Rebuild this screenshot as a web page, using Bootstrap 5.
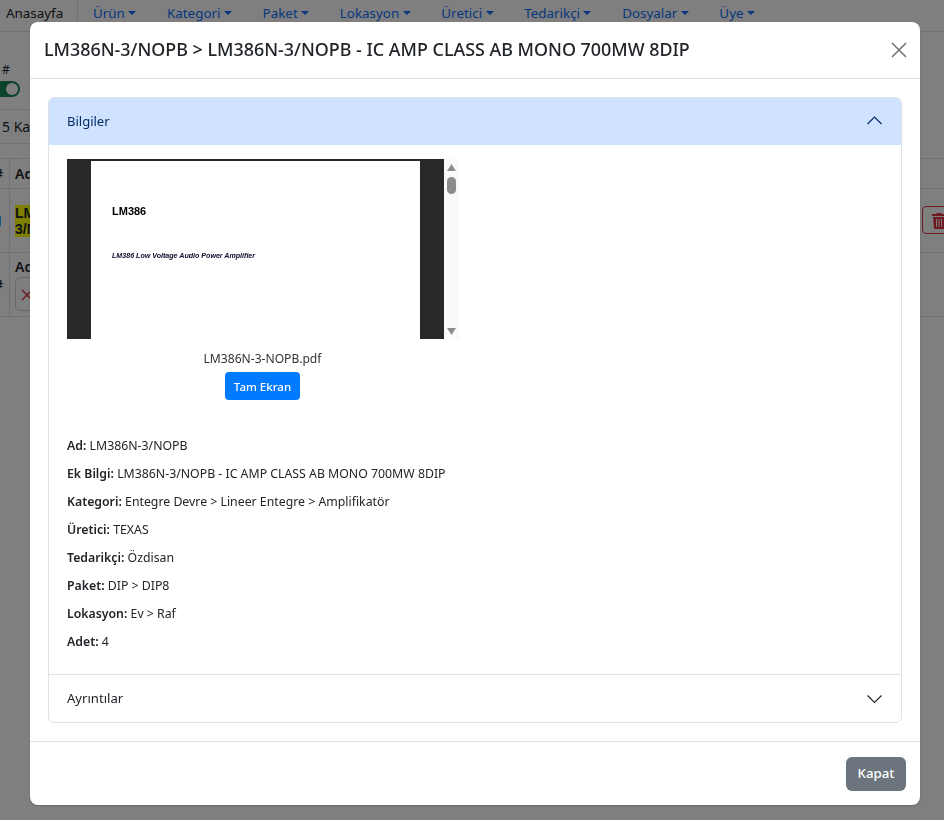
<!doctype html>
<html lang="tr"><head><meta charset="utf-8">
<link href="https://cdn.jsdelivr.net/npm/bootstrap@5.3.0/dist/css/bootstrap.min.css" rel="stylesheet">
<style>
html,body{height:820px;overflow:hidden}
body{font-family:"Noto Sans","Open Sans",sans-serif;font-size:13px;color:#212529;background:#fff}
.topnav{height:32px;border-bottom:1px solid #dee2e6;align-items:flex-start;padding-top:3px;font-size:13.4px;white-space:nowrap}
.topnav a{color:#0d6efd;text-decoration:none}
.topnav .homelink{color:#212529;padding:0 12px 0 6px;margin-top:-3px;padding-top:3px;border-right:1px solid #dee2e6;height:27px;width:78px}
.menulinks{gap:30.7px;padding-left:15px}
.hashmark{font-size:12px;line-height:14px;padding:31px 0 0 2px;height:49px}
.pill{display:block;width:26px;height:16px;margin-left:-6px;border-radius:8px;background:#198754;position:relative}
.pill::after{content:"";position:absolute;right:2px;top:2px;width:12px;height:12px;border-radius:50%;background:#fff}
.countline{width:100px;margin-top:12px;padding-left:2px;border-top:1px solid #dee2e6;border-bottom:1px solid #dee2e6;line-height:33px;font-size:14px;height:35px;white-space:nowrap}
.bgtable{margin-top:14px;font-size:14px;border-top:1px solid #dee2e6}
.bgrow{display:flex;border-bottom:1px solid #dee2e6}
.cellhash{width:10px;flex:none;border-right:1px solid #dee2e6;display:flex;justify-content:flex-end;align-items:center;padding-right:6px;font-weight:600}
.cellname{padding:0 0 0 5px;white-space:nowrap}
.r1{height:30px}.r1 .cellname{line-height:29px}.r2{height:64px}.r3{height:64px}
.r2 .cellname{padding-top:16px}
.r3 .cellname{padding-top:4px;line-height:20px}
.hilite{background:#ffff00;font-family:"Liberation Sans",Arial,sans-serif;font-weight:700;line-height:16px;display:inline-block}
.xbox{display:flex;width:40px;height:34px;border:1px solid #ced4da;border-radius:6px;padding:11px 0 0 5px}
.trashbtn{flex:none;margin:17px -18px 0 auto;width:40px;height:28px;border:1px solid #dc3545;border-radius:4px;padding:6px 0 0 9px;line-height:0}
.viewmodal{display:block;z-index:1055}
.dlg{max-width:890px;width:890px;margin:22px 0 0 30px}
.dlgcontent{height:783px;border-radius:8px;border:0;box-shadow:0 1px 2px rgba(0,0,0,.2)}
.dlghead{height:57px;padding:0 14px;border-bottom:1px solid #dee2e6}
.dlgtitle{font-size:17.9px;font-weight:500;line-height:27px;margin-top:-1px;white-space:nowrap}
.closex{width:16px;height:16px;padding:0;border:0;background:none;margin-right:-1px}
.dlgbody{padding:18px;height:662px;flex:none}
.acc{border:1px solid #dee2e6;border-radius:6px;height:626px;overflow:hidden}
.acchead{height:47px;padding:1px 18px 0;background:#cfe2ff;color:#052c65;font-size:13px}
.acchead svg{margin-top:-2px}
.accpanel{padding:14px 18px 0;height:530px;border-bottom:1px solid #dee2e6}
.accfoot{height:47px;padding:1px 18px 0;font-size:13.1px}
.viewer{width:392px;height:180px;display:flex;background:#fafafa}
.pdfpane{width:377px;height:180px;background:#282828;padding:2px 24px 0;flex:none}
.pdfpage{background:#fff;height:178px;width:329px;padding:44px 0 0 21px;font-family:"Liberation Sans",Arial,sans-serif;color:#000}
.pdft1{font-size:11px;font-weight:700;line-height:13px}
.pdft2{font-size:7.1px;font-weight:700;font-style:italic;margin-top:33px;line-height:10px;white-space:nowrap;color:#0a0a2a}
.sbar{flex:1;position:relative}
.sbar svg{position:absolute;left:0;top:0}
.pdfcap{width:391px;text-align:center;margin-top:10px;line-height:20px;font-size:12.1px;color:#333}
.fullbtn{background:#007bff;color:#fff;font-size:11.500px;font-weight:500;border-radius:4px;border:0;height:28px;width:75px;padding:1px 0 0;margin:3px auto 0;line-height:27px;display:block}
.facts{margin-top:36px}
.facts p{margin:0 0 8px;line-height:20px;font-size:12.3px}
.facts b{font-weight:600}
.dlgfoot{height:64px;padding:14px;border-top:1px solid #dee2e6;flex:none}
.closebtn{width:60px;height:34px;margin:0;background:#6c757d;color:#fff;font-weight:500;font-size:13.3px;border-radius:6px;border:0;padding:0}
</style></head>
<body>
<nav class="topnav d-flex">
  <a class="homelink" href="#">Anasayfa</a>
  <div class="menulinks d-flex">
    <a href="#" class="dropdown-toggle">Ürün</a><a href="#" class="dropdown-toggle">Kategori</a><a href="#" class="dropdown-toggle">Paket</a><a href="#" class="dropdown-toggle">Lokasyon</a><a href="#" class="dropdown-toggle">Üretici</a><a href="#" class="dropdown-toggle">Tedarikçi</a><a href="#" class="dropdown-toggle">Dosyalar</a><a href="#" class="dropdown-toggle">Üye</a>
  </div>
</nav>
<div class="bgzone">
  <div class="hashmark">#</div>
  <span class="pill"></span>
  <div class="countline">5 Kayıt</div>
  <div class="bgtable">
    <div class="bgrow r1"><div class="cellhash">#</div><div class="cellname fw-semibold">Adı</div></div>
    <div class="bgrow r2"><div class="cellhash text-primary">1</div><div class="cellname"><span class="hilite">LM386N-<br>3/NOPB</span></div><div class="trashbtn"><svg width="14" height="16" viewBox="0 0 14 16" fill="#dc3545"><path d="M5 0h4l1 1h4v2H0V1h4zM1 4h12l-1 12H2zm3 2v8h1V6zm2.500 0v8h1V6zM9 6v8h1V6z"/></svg></div></div>
    <div class="bgrow r3"><div class="cellhash">#</div><div class="cellname"><div class="fw-semibold">Adı</div><div class="xbox"><svg width="12" height="12" viewBox="0 0 12 12"><path d="M1 1l10 10M11 1L1 11" stroke="#dc3545" stroke-width="1.500" fill="none"/></svg></div></div></div>
  </div>
</div>
<div class="modal-backdrop show"></div>
<div class="modal viewmodal">
  <div class="modal-dialog dlg">
    <div class="modal-content dlgcontent">
      <div class="modal-header dlghead d-flex justify-content-between align-items-center">
        <h5 class="modal-title dlgtitle">LM386N-3/NOPB &gt; LM386N-3/NOPB - IC AMP CLASS AB MONO 700MW 8DIP</h5>
        <button class="closex d-flex" aria-label="Kapat"><svg width="16" height="16" viewBox="0 0 16 16"><path d="M1 1l14 14M15 1L1 15" stroke="#6f6f6f" stroke-width="1.500" fill="none"/></svg></button>
      </div>
      <div class="modal-body dlgbody">
        <div class="acc">
          <div class="acchead d-flex justify-content-between align-items-center"><span>Bilgiler</span><svg width="16" height="16" viewBox="0 0 16 16"><path d="M0.500 11 7.500 4l7 7" stroke="#052c65" stroke-width="1.200" fill="none"/></svg></div>
          <div class="accpanel">
            <div class="viewer">
              <div class="pdfpane"><div class="pdfpage"><div class="pdft1">LM386</div><div class="pdft2">LM386 Low Voltage Audio Power Amplifier</div></div></div>
              <div class="sbar"><svg width="15" height="180" viewBox="0 0 15 180"><path d="M7.500 5l4.500 7H3zM7.500 176L3 169h9z" fill="#8c8c8c"/><rect x="3" y="18" width="9" height="17" rx="4.500" fill="#8c8c8c"/></svg></div>
            </div>
            <div class="pdfcap">LM386N-3-NOPB.pdf<button class="fullbtn">Tam Ekran</button></div>
            <div class="facts">
              <p><b>Ad:</b> LM386N-3/NOPB</p>
              <p><b>Ek Bilgi:</b> LM386N-3/NOPB - IC AMP CLASS AB MONO 700MW 8DIP</p>
              <p><b>Kategori:</b> Entegre Devre &gt; Lineer Entegre &gt; Amplifikatör</p>
              <p><b>Üretici:</b> TEXAS</p>
              <p><b>Tedarikçi:</b> Özdisan</p>
              <p><b>Paket:</b> DIP &gt; DIP8</p>
              <p><b>Lokasyon:</b> Ev &gt; Raf</p>
              <p><b>Adet:</b> 4</p>
            </div>
          </div>
          <div class="accfoot d-flex justify-content-between align-items-center"><span>Ayrıntılar</span><svg width="16" height="16" viewBox="0 0 16 16"><path d="M0.500 4.500l7 7 7-7" stroke="#212529" stroke-width="1.200" fill="none"/></svg></div>
        </div>
      </div>
      <div class="modal-footer dlgfoot"><button class="closebtn">Kapat</button></div>
    </div>
  </div>
</div>
<script src="https://cdn.jsdelivr.net/npm/bootstrap@5.3.0/dist/js/bootstrap.bundle.min.js"></script>
</body></html>
